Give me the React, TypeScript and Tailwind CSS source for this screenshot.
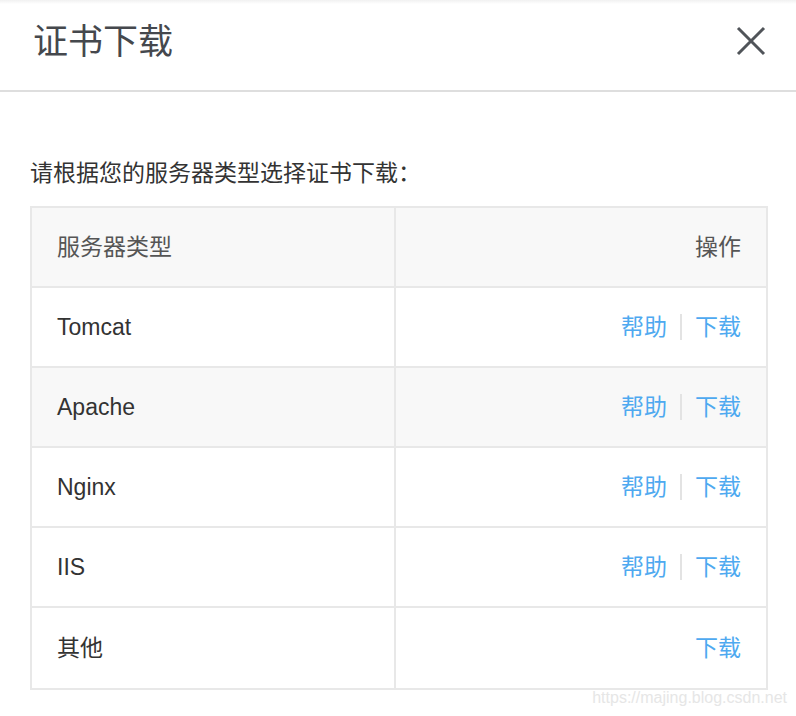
import React from "react";

const rows = [
  { name: "Tomcat", help: true },
  { name: "Apache", help: true },
  { name: "Nginx", help: true },
  { name: "IIS", help: true },
  { name: "其他", help: false },
];

const font = {
  fontFamily: '"Liberation Sans", "Noto Sans CJK SC", sans-serif',
};

export default function App() {
  return (
    <div className="w-[796px] h-[716px] bg-white relative overflow-hidden" style={font}>
      {/* header */}
      <div className="h-[92px] border-b-2 border-[#dedede] flex flex-col">
        <div className="h-[4px] bg-gradient-to-b from-[#f1f1f1] to-white" />
        <div className="flex-1 flex items-center justify-between pl-[33px] pr-[30px]">
          <h1 className="text-[35px] leading-none text-[#45484d] mt-[-12px]">证书下载</h1>
          <button className="w-[30px] h-[30px] mt-[-12px] flex items-center justify-center">
            <svg width="30" height="30" viewBox="0 0 30 30">
              <path d="M2 2 L28 28 M28 2 L2 28" stroke="#505459" strokeWidth="3" />
            </svg>
          </button>
        </div>
      </div>

      <div className="px-[30px] pt-[66px]">
        <p className="text-[23px] leading-[30px] text-[#333]">请根据您的服务器类型选择证书下载：</p>

        <div className="mt-[18px] w-[738px] border-2 border-[#e8e8e8]">
          <div className="grid grid-cols-[364px_1fr] h-[80px] bg-[#f8f8f8] border-b-2 border-[#e8e8e8]">
            <div className="flex items-center pl-[25px] border-r-2 border-[#e8e8e8] text-[23px] text-[#555]">
              服务器类型
            </div>
            <div className="flex items-center justify-end pr-[25px] text-[23px] text-[#555]">操作</div>
          </div>
          {rows.map((r, i) => (
            <div
              key={r.name}
              className={
                "grid grid-cols-[364px_1fr] h-[80px] " +
                (i < rows.length - 1 ? "border-b-2 border-[#e8e8e8] " : "") +
                (r.name === "Apache" ? "bg-[#f8f8f8]" : "bg-white")
              }
            >
              <div className="flex items-center pl-[25px] border-r-2 border-[#e8e8e8] text-[23px] text-[#333]">
                {r.name}
              </div>
              <div className="flex items-center justify-end pr-[25px] text-[23px] text-[#4ea9f0]">
                {r.help && (
                  <>
                    <span>帮助</span>
                    <span className="mx-[13px] w-[2px] h-[26px] bg-[#e3e3e3]" />
                  </>
                )}
                <span>下载</span>
              </div>
            </div>
          ))}
        </div>
      </div>

      <div
        className="absolute right-[9px] top-[686px] text-[16px] text-[#e6e6e6]"
        style={{ fontFamily: '"Liberation Sans", sans-serif' }}
      >
        https://majing.blog.csdn.net
      </div>
    </div>
  );
}
